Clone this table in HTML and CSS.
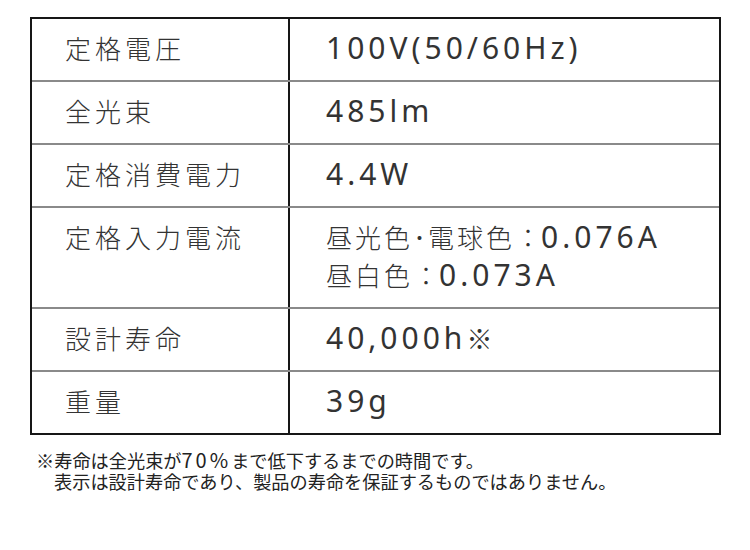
FILE: index.html
```
<!DOCTYPE html>
<html lang="ja">
<head>
<meta charset="utf-8">
<link rel="stylesheet" href="styles.css">
</head>
<body>
<div class="spec">
  <div class="row">
    <div class="label">定格電圧</div>
    <div class="value"><span class="lat">100V(50/60Hz)</span></div>
  </div>
  <div class="row">
    <div class="label">全光束</div>
    <div class="value"><span class="lat">485lm</span></div>
  </div>
  <div class="row">
    <div class="label">定格消費電力</div>
    <div class="value"><span class="lat">4.4W</span></div>
  </div>
  <div class="row">
    <div class="label">定格入力電流</div>
    <div class="value">昼光色<span class="dot">･</span>電球色<span class="colon">：</span><span class="lat">0.076A</span><br>昼白色<span class="colon">：</span><span class="lat">0.073A</span></div>
  </div>
  <div class="row">
    <div class="label">設計寿命</div>
    <div class="value"><span class="lat">40,000h</span>※</div>
  </div>
  <div class="row">
    <div class="label">重量</div>
    <div class="value"><span class="lat">39g</span></div>
  </div>
</div>
<div class="note">
  <div class="note-line">※寿命は全光束が<span class="pct">70%</span>まで低下するまでの時間です。</div>
  <div class="note-line indent">表示は設計寿命であり、製品の寿命を保証するものではありません。</div>
</div>
</body>
</html>
```
FILE: styles.css
```
html, body {
  margin: 0;
  padding: 0;
  background: #ffffff;
}
body {
  font-family: "Noto Sans CJK JP", "Noto Sans", sans-serif;
  color: #333333;
}
.spec {
  box-sizing: border-box;
  width: 691px;
  margin: 17px 0 0 30px;
  border: 2px solid #161616;
}
.row {
  display: grid;
  grid-template-columns: 258px 1fr;
}
.row + .row {
  border-top: 2px solid #8a8a8a;
}
.label,
.value {
  padding: 10px 0 13px;
  font-size: 26px;
  font-weight: 300;
  line-height: 38px;
  white-space: nowrap;
}
.label {
  border-right: 2px solid #161616;
  padding-left: 33px;
  letter-spacing: 4px;
}
.value {
  padding-left: 36px;
  letter-spacing: 3px;
}
.lat {
  font-family: "Noto Sans", sans-serif;
  font-size: 30px;
  font-weight: 400;
  letter-spacing: 4px;
}
.dot {
  letter-spacing: 2px;
}
.colon {
  letter-spacing: 0;
}
.note {
  margin: 14px 0 0 36px;
  font-size: 18.2px;
  line-height: 21px;
  color: #222222;
}
.pct {
  font-size: 20px;
  letter-spacing: 3px;
}
.indent {
  padding-left: 18px;
}
```
